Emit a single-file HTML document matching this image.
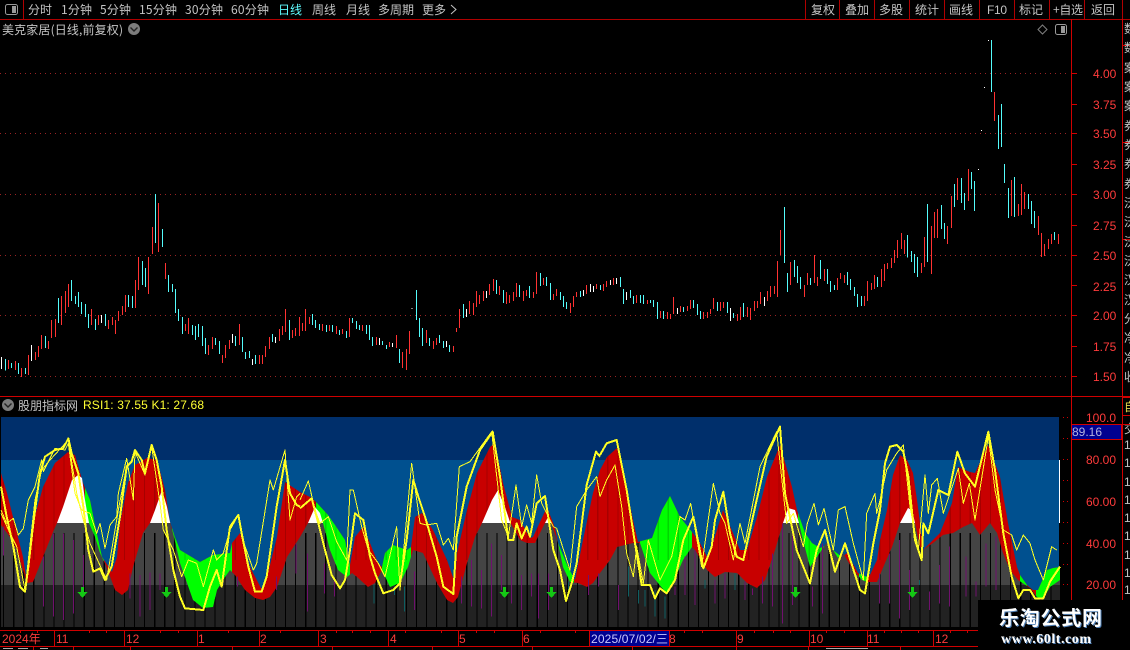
<!DOCTYPE html>
<html><head><meta charset="utf-8"><title>美克家居</title>
<style>
html,body{margin:0;padding:0;background:#000;width:1130px;height:650px;overflow:hidden}
svg{display:block;position:absolute;left:0;top:0}
text{font-family:"WenQuanYi Zen Hei","Noto Sans CJK SC",sans-serif;font-size:12px;fill:#c4c4c4}
.n{font-family:"Liberation Sans",sans-serif}
.r{fill:#ff3b3b;font-family:"Liberation Sans",sans-serif}
.c{stroke-width:3;fill:none;shape-rendering:crispEdges}
</style></head><body>
<svg width="1130" height="650" viewBox="0 0 1130 650" xmlns="http://www.w3.org/2000/svg">
<defs>
<clipPath id="u"><polygon points="1,473 7,493 17,533 23,557 27,583 33,523 43,487 55,463 68,452 75,455 83,483 90,500 95,525 102,557 106,563 112,572 117,557 120,523 128,483 135,465 147,458 157,460 165,490 170,522 175,537 180,550 200,562 213,555 230,553 232,543 240,533 250,567 262,590 267,577 277,537 285,482 300,492 312,498 317,503 328,515 335,525 345,540 350,565 355,537 363,527 370,543 378,563 382,567 385,553 393,545 407,550 411,547 415,517 422,513 433,530 447,560 455,583 457,553 467,510 477,473 490,447 495,443 503,483 512,517 520,520 530,538 533,537 547,507 555,528 558,543 568,567 575,580 583,540 593,493 600,470 607,457 617,448 627,490 633,520 638,542 652,538 662,510 670,496 680,517 692,532 700,543 707,557 713,543 723,510 733,533 740,550 747,550 757,517 767,477 780,445 792,487 797,510 805,533 812,543 820,548 827,545 833,550 842,557 847,553 858,573 867,577 870,575 877,560 880,540 887,510 893,475 900,455 907,460 913,473 917,500 920,523 923,550 940,533 952,503 958,467 970,472 975,473 988,445 1000,477 1008,523 1017,567 1020,575 1027,585 1033,590 1038,590 1047,570 1053,568 1060,567 1060,627 1,627"/></clipPath>
<clipPath id="m"><polygon points="1,525 10,537 17,550 23,570 27,583 33,582 43,557 53,532 57,523 63,507 72,480 78,475 82,478 85,500 89,523 95,537 100,553 107,568 115,590 122,595 128,590 133,567 143,533 150,523 155,510 162,490 167,507 170,522 173,533 180,563 193,600 203,608 213,607 217,590 225,577 230,570 235,575 245,590 255,598 263,600 270,597 277,587 287,557 300,537 308,523 315,507 320,513 323,523 330,550 338,570 347,577 352,573 357,577 368,587 375,583 382,570 390,587 400,583 408,567 413,550 423,553 437,583 447,600 453,603 458,597 467,563 475,537 482,523 492,500 498,490 505,507 510,522 520,540 527,543 535,543 545,523 548,517 552,525 558,543 563,567 570,582 578,583 587,587 593,583 600,573 610,560 617,547 633,543 640,543 650,573 662,588 667,593 673,583 683,560 692,547 695,550 707,570 715,577 725,572 737,573 747,583 757,588 765,580 775,550 783,523 788,508 795,510 799,523 803,540 810,567 817,557 827,542 833,550 838,558 843,553 853,570 862,580 867,582 877,582 885,563 892,547 900,523 908,508 912,510 915,523 920,547 923,550 933,543 943,535 953,533 963,527 972,523 980,535 990,523 997,533 1003,553 1010,570 1018,580 1030,588 1037,597 1043,599 1050,587 1060,580 1060,627 1,627"/></clipPath>
</defs>

<!-- toolbar -->
<rect x="0" y="19" width="1130" height="1" fill="#b00000"/>
<rect x="23" y="0" width="1" height="19" fill="#b00000"/>
<rect x="5.5" y="4.5" width="12" height="10" rx="2" fill="none" stroke="#9a9a9a"/>
<rect x="12" y="6" width="4" height="7" fill="#9a9a9a"/>
<text x="28" y="14">分时</text>
<text x="61" y="14" textLength="31">1分钟</text>
<text x="100" y="14" textLength="31">5分钟</text>
<text x="139" y="14" textLength="38">15分钟</text>
<text x="185" y="14" textLength="38">30分钟</text>
<text x="231" y="14" textLength="38">60分钟</text>
<text x="278" y="14" style="fill:#5ffcff">日线</text>
<text x="312" y="14">周线</text>
<text x="346" y="14">月线</text>
<text x="378" y="14">多周期</text>
<text x="422" y="14">更多</text>
<path d="M451 5l5 4.5-5 4.5" fill="none" stroke="#c4c4c4"/>
<path d="M805.5 0V19M839.5 0V19M874.5 0V19M909.5 0V19M944.5 0V19M979.5 0V19M1014.5 0V19M1049.5 0V19M1084.5 0V19M1122.5 0V19" stroke="#b00000" fill="none"/>
<text x="811" y="14">复权</text>
<text x="845" y="14">叠加</text>
<text x="879" y="14">多股</text>
<text x="915" y="14">统计</text>
<text x="949" y="14">画线</text>
<text x="987" y="14" class="n" textLength="20">F10</text>
<text x="1019" y="14">标记</text>
<text x="1053" y="14" textLength="30">+自选</text>
<text x="1091" y="14">返回</text>

<!-- title -->
<text x="2" y="34" textLength="121">美克家居(日线,前复权)</text>
<circle cx="134" cy="29" r="6" fill="#7c7c7c"/>
<path d="M130.5 27.5l3.5 3.5 3.5-3.5" fill="none" stroke="#222" stroke-width="1.4"/>
<path d="M1042.5 25l4.5 4.5-4.5 4.5-4.5-4.5z" fill="none" stroke="#808080"/>
<rect x="1055.5" y="24.5" width="11" height="10" rx="2" fill="none" stroke="#9a9a9a"/>
<rect x="1061" y="26" width="4" height="7" fill="#9a9a9a"/>

<!-- price grid -->
<path d="M0 73.5H1070M0 133.5H1070M0 194.5H1070M0 255.5H1070M0 315.5H1070M0 376.5H1070" stroke="#992222" stroke-dasharray="1 4" fill="none"/>

<!-- candles region 1 -->
<g transform="translate(0,190) scale(.33333)" class="c">
<path stroke="#ff3232" d="M25 510V537M46 513V540M64 534V561M85 495V555M106 486V510M115 468V501M124 435V477M145 453V477M154 390V444M166 387V441M184 318V405M196 303V369M205 282V351M274 357V405M295 375V405M325 390V417M337 381V405M346 390V432M355 363V393M367 348V375M376 315V366M406 270V354M415 201V300M445 201V312M457 111V192M475 39V186M496 219V267M556 402V423M565 384V432M625 465V495M637 441V477M667 495V519M676 465V504M688 450V477M718 402V465M778 495V522M787 495V522M796 468V501M808 441V477M838 417V453M847 408V435M856 357V426M877 420V444M886 414V438M898 381V438"/>
<path stroke="#54fcfc" d="M16 507V542M34 519V534M55 519V552M76 534V552M136 438V474M175 324V399M214 270V333M226 318V342M235 306V351M244 336V372M256 342V381M265 372V414M286 387V420M316 372V408M385 315V351M397 318V354M427 213V285M436 234V291M466 12V159M487 117V171M505 255V306M517 282V306M526 297V369M535 357V393M547 381V432M577 405V435M586 408V450M595 402V441M607 408V468M616 444V492M646 444V465M658 453V492M706 438V468M727 441V486M736 486V507M748 483V504M766 495V522M817 432V456M868 390V450"/>
<path stroke="#fff" d="M4 501V537M94 465V513M304 375V399M697 432V459M757 507V525M826 441V459"/>
</g>
<!-- candles region 2 -->
<g transform="translate(300,190) scale(.33333)" class="c">
<path stroke="#ff3232" d="M7 399V423M16 357V423M28 381V402M67 402V423M88 405V423M109 408V432M127 417V432M148 384V441M187 405V423M229 441V465M268 456V471M289 435V474M307 486V534M319 477V540M328 423V492M379 420V459M400 453V477M409 444V465M460 468V486M469 414V426M478 357V414M508 333V372M520 339V375M529 303V351M538 315V342M550 303V333M568 282V315M580 267V303M598 288V315M619 306V342M628 315V339M640 306V333M649 279V321M670 303V333M679 300V318M700 306V324M709 246V312M730 264V285M760 312V330M769 297V318M811 339V369M820 318V351M829 306V321M859 285V312M889 282V297"/>
<path stroke="#54fcfc" d="M37 372V405M46 390V414M58 402V420M79 405V426M97 405V426M118 420V435M139 423V444M157 384V399M169 393V417M178 405V420M199 405V432M208 405V450M217 441V468M247 453V465M259 465V477M298 477V519M349 300V390M358 384V441M367 414V468M388 444V468M418 435V459M430 453V474M448 465V486M490 342V384M589 270V312M610 300V339M658 285V321M688 288V324M721 249V288M739 261V288M751 279V330M781 306V330M790 318V351M799 336V357M841 303V321"/>
<path stroke="#fff" d="M238 444V465M277 459V471M336 354V357M439 453V471M499 357V381M559 303V324M850 300V318M871 282V306M880 288V306"/>
</g>
<!-- candles region 3 -->
<g transform="translate(600,190) scale(.33333)" class="c">
<path stroke="#ff3232" d="M10 282V303M19 273V291M40 264V285M109 315V339M142 330V342M181 363V384M202 366V387M211 372V387M220 321V372M241 348V366M262 348V363M271 330V357M310 366V387M322 366V384M331 357V372M340 324V357M361 336V363M370 336V354M412 372V393M421 351V390M442 351V381M451 354V390M463 333V363M472 333V354M481 306V342M502 303V333M511 288V321M523 288V312M532 213V321M541 120V195M571 216V285M613 285V321M622 249V285M643 195V279M652 261V288M673 237V273M712 264V300M721 249V267M733 255V279M793 318V348M802 273V333M814 279V300M823 255V297M844 237V291M853 222V273M862 219V237M874 204V234M883 180V219M892 150V204"/>
<path stroke="#54fcfc" d="M1 285V300M61 261V291M70 297V342M91 300V324M100 318V342M121 315V339M130 315V342M151 330V339M160 330V351M172 336V387M190 363V387M250 351V366M280 330V354M292 342V375M301 363V387M352 336V363M382 336V369M400 369V384M430 339V381M553 51V219M562 249V306M583 210V261M592 228V279M601 261V297M631 264V285M661 210V267M682 237V282M691 273V306M703 285V300M742 246V285M751 267V300M763 291V318M772 312V351M784 318V348M832 261V291"/>
<path stroke="#fff" d="M31 270V285M49 264V282M79 306V330M232 354V372M391 354V393M493 321V348"/>
</g>
<!-- candles region 4 -->
<g transform="translate(900,30) scale(.33333)" class="c">
<path stroke="#ff3232" d="M4 609V657M13 630V672M64 699V729M73 621V711M94 588V732M103 546V624M112 537V624M142 588V642M154 498V594M172 444V510M205 417V513M283 186V273M334 450V558M355 522V558M364 462V555M373 486V537M415 558V615M424 609V681M433 642V678M445 627V657M454 612V642M475 612V642"/>
<path stroke="#54fcfc" d="M22 615V683M34 663V696M43 672V729M52 681V741M82 522V696M124 525V597M133 579V627M163 462V531M184 444V519M193 489V540M214 426V477M223 453V543M274 30V186M295 255V357M304 222V351M313 402V459M325 474V564M343 441V561M385 492V537M394 513V582M403 543V594M463 606V630"/>
<path stroke="#fff" d="M235 417V420M244 300V303M253 171V174M265 30V33"/>
</g>

<!-- axis frames -->
<rect x="0" y="396" width="1130" height="1" fill="#d00000"/>
<rect x="1071" y="19" width="1" height="620" fill="#d00000"/>
<rect x="1122" y="19" width="1" height="620" fill="#d00000"/>
<path d="M1122 45.5H1130M1122 142.5H1130M1122 239.5H1130M1122 397.5H1130" stroke="#d00000"/>
<path d="M1072 73.5h5M1072 104.5h5M1072 133.5h5M1072 164.5h5M1072 194.5h5M1072 225.5h5M1072 255.5h5M1072 285.5h5M1072 315.5h5M1072 346.5h5M1072 376.5h5" stroke="#d00000"/>
<g class="r">
<text class="r" x="1093" y="78">4.00</text>
<text class="r" x="1093" y="109">3.75</text>
<text class="r" x="1093" y="138">3.50</text>
<text class="r" x="1093" y="169">3.25</text>
<text class="r" x="1093" y="199">3.00</text>
<text class="r" x="1093" y="230">2.75</text>
<text class="r" x="1093" y="260">2.50</text>
<text class="r" x="1093" y="291">2.25</text>
<text class="r" x="1093" y="320">2.00</text>
<text class="r" x="1093" y="351">1.75</text>
<text class="r" x="1093" y="381">1.50</text>
</g>
<!-- clipped side column -->
<svg x="1123" y="20" width="7" height="380" overflow="hidden">
<text x="1" y="13">数</text><text x="1" y="32">数</text><text x="1" y="52">案</text><text x="1" y="71">案</text><text x="1" y="90">案</text><text x="1" y="110">券</text><text x="1" y="129">券</text><text x="1" y="148">券</text><text x="1" y="168">券</text><text x="1" y="187">沃</text><text x="1" y="206">沃</text><text x="1" y="226">沃</text><text x="1" y="245">沃</text><text x="1" y="264">汉</text><text x="1" y="284">汉</text><text x="1" y="303">分</text><text x="1" y="322">净</text><text x="1" y="342">净</text><text x="1" y="361">收</text>
</svg>

<!-- lower panel header -->
<circle cx="8" cy="405" r="6" fill="#7c7c7c"/>
<path d="M4.5 403.5l3.5 3.5 3.5-3.5" fill="none" stroke="#222" stroke-width="1.4"/>
<text x="18" y="410">股朋指标网</text>
<text class="n" x="83" y="409" style="fill:#ffff33" textLength="121">RSI1: 37.55  K1: 27.68</text>

<!-- oscillator -->
<rect x="1" y="417" width="1058" height="43" fill="#002f6b"/>
<rect x="1" y="460" width="1058" height="167" fill="#00508f"/>
<g clip-path="url(#u)" shape-rendering="crispEdges">
<rect x="1" y="417" width="1059" height="210" fill="#c80000"/>
<path fill="#00ff00" d="M85 417h19v210h-19zM172 417h60v210h-60zM316 417h34v210h-34zM382 417h29v210h-29zM558 417h16v210h-16zM640 417h52v210h-52zM798 417h44v210h-44zM859 417h8v210h-8zM1020 417h7v210h-7zM1036 417h24v210h-24z"/>
<path d="M3 495H1060" stroke="#000" stroke-opacity=".16" stroke-width="130" stroke-dasharray="1.2 8.87" fill="none"/>
</g>
<g clip-path="url(#m)" shape-rendering="crispEdges">
<rect x="1" y="417" width="1059" height="106" fill="#fff"/>
<rect x="1" y="523" width="1059" height="62" fill="#444"/>
<rect x="1" y="585" width="1059" height="42" fill="#222"/>
<path d="M3 580H1060" stroke="#000" stroke-width="94" stroke-dasharray="1.2 8.87" fill="none"/>
</g>
<!-- purple / teal columns -->
<g fill="none" stroke-width="3" shape-rendering="crispEdges">
<path transform="translate(0,390) scale(.33333)" stroke="#70106e" d="M10 410V497M130 500V650M160 430V680M190 430V690M220 450V670M250 495V600M390 550V625M420 555V680M450 548V660M480 550V600M712 560V590M830 560V600M888 460V550"/>
<path transform="translate(300,410) scale(.33333)" stroke="#70106e" d="M22 430V605M73 460V550M103 510V560M343 485V600M484 500V580M515 450V590M545 480V595M575 400V620M605 435V540M635 480V580M665 495V600M695 490V560M715 490V625M745 490V600M866 495V555M895 490V530"/>
<path transform="translate(300,410) scale(.33333)" stroke="#0e5f62" d="M222 525V580M283 530V555M313 530V605M805 515V540"/>
<path transform="translate(600,410) scale(.33333)" stroke="#70106e" d="M55 525V600M225 530V555M255 440V555M285 420V585M345 510V580M375 490V565M435 515V570M457 535V555M487 500V580M517 430V590M547 340V640M577 340V585M637 530V590M667 400V610M838 490V580M868 430V580"/>
<path transform="translate(600,410) scale(.33333)" stroke="#0e5f62" d="M85 470V560M115 540V580M135 540V590M165 540V620M195 560V625M315 510V535M405 490V540"/>
<path transform="translate(880,390) scale(.33333)" stroke="#70106e" d="M28 510V625M58 450V685M88 540V660M148 605V660M178 525V640M208 470V650M258 500V620M288 575V620M318 460V590M348 440V600"/>
<path transform="translate(880,390) scale(.33333)" stroke="#0e5f62" d="M118 570V585"/>
</g>
<rect x="1059" y="460" width="1" height="63" fill="#fff"/>

<!-- yellow lines -->
<g fill="none" stroke="#ffff22" stroke-linejoin="round" shape-rendering="crispEdges">
<g transform="translate(0,390) scale(.33333)">
<polyline stroke-width="3" points="3,360 20,400 40,385 55,435 70,415 85,330 105,290 125,210 130,245 165,175 195,180 205,160 225,310 245,360 270,370 290,430 300,400 315,475 330,405 350,380 355,310 380,205 400,330 405,185 435,255 455,170 480,340 490,420 520,480 545,560 565,510 590,520 610,590 640,480 650,510 670,490 690,420 715,375 725,440 760,540 770,520 810,270 820,300 855,180 870,390 890,320 900,310"/>
<polyline stroke-width="3" points="3,370 30,430 50,470 75,600 105,330 125,240 150,210 205,150 230,310 250,390 270,460 320,570 355,360 380,230"/>
<polyline stroke-width="6" points="3,290 20,380 40,470 60,590 75,605 85,530 100,400 120,250 135,200 165,180 190,175 205,145 215,190 235,250 250,350 265,480 280,545 300,535 315,570 335,530 360,380 380,230 395,215 405,180 425,210 435,250 455,165 470,210 485,290 500,420 520,540 540,620 555,655 610,660 630,590 650,540 665,590 690,410 715,375 725,430 745,530 765,605 785,605 800,560 830,350 855,210 870,310 890,345 900,350"/>
</g>
<g transform="translate(300,410) scale(.33333)">
<polyline stroke-width="3" points="0,270 25,213 45,300 60,340 85,320 110,395 140,450 150,240 160,240 185,350 205,420 235,460 255,500 290,350 300,540 335,160 360,340 380,345 410,340 430,405 445,385 460,420 478,170 510,155 575,65 605,330 625,380 648,225 665,350 680,285 695,340 710,195 725,280 760,350 770,355 810,480 830,290 860,240 890,200 900,260"/>
<polyline stroke-width="6" points="0,295 35,265 55,340 75,420 95,495 120,535 135,510 150,420 165,310 190,330 210,440 225,490 250,550 280,540 300,520 320,390 340,210 355,260 375,320 410,440 430,530 460,552 470,380 500,230 540,120 578,65 600,200 625,390 640,390 650,340 665,385 680,350 690,380 710,280 735,258 760,420 780,480 798,573 815,520 830,460 860,225 888,125 900,140"/>
</g>
<g transform="translate(600,410) scale(.33333)">
<polyline stroke-width="3" points="0,260 20,210 45,165 65,290 80,430 100,500 110,410 130,520 145,390 180,510 215,440 240,320 255,330 272,280 305,470 340,220 360,310 375,340 400,450 420,340 435,400 480,170 530,65 560,340 580,310 610,410 622,340 642,280 655,345 672,295 700,420 715,300 735,290 760,400 790,510 800,310 825,250 830,310 840,270"/>
<polyline stroke-width="6" points="0,135 20,100 50,90 80,240 105,400 125,525 150,525 165,565 180,535 200,550 225,510 250,390 280,320 310,475 335,410 345,330 370,245 390,370 410,440 430,450 470,270 500,140 540,50 555,250 590,420 630,520 650,420 675,360 705,485 735,400 780,540 795,550 820,400 840,300"/>
</g>
<g transform="translate(880,390) scale(.33333)">
<polyline stroke-width="3" points="0,330 20,240 50,190 70,165 90,350 115,480 135,255 145,370 155,285 172,265 190,370 235,235 250,340 268,280 285,390 325,140 345,300 370,420 395,435 410,480 430,435 450,460 465,510 490,570 515,470 530,480"/>
<polyline stroke-width="6" points="0,360 15,220 30,170 50,165 70,185 85,260 105,450 125,510 130,400 145,430 175,300 205,315 232,185 255,250 285,290 325,125 345,240 370,430 395,560 415,625 430,600 450,600 465,625 490,625 510,575 540,530"/>
</g>
</g>

<!-- arrows -->
<g fill="#14c814" shape-rendering="crispEdges">
<path d="M81 587h3v5h3.500l-5 6-5-6h3.500z"/>
<path d="M165 587h3v5h3.500l-5 6-5-6h3.500z"/>
<path d="M503 587h3v5h3.500l-5 6-5-6h3.500z"/>
<path d="M550 587h3v5h3.500l-5 6-5-6h3.500z"/>
<path d="M794 587h3v5h3.500l-5 6-5-6h3.500z"/>
<path d="M911 587h3v5h3.500l-5 6-5-6h3.500z"/>
</g>

<!-- lower axis -->
<path d="M1063 417.500h8M1063 438.500h8M1063 459.500h8M1063 480.500h8M1063 501.500h8M1063 522.500h8M1063 543.500h8M1063 564.500h8M1063 584.500h8" stroke="#d00000" stroke-dasharray="1 3"/>
<text class="r" x="1086" y="422">100.0</text>
<text class="r" x="1086" y="464">80.00</text>
<text class="r" x="1086" y="506">60.00</text>
<text class="r" x="1086" y="548">40.00</text>
<text class="r" x="1086" y="589">20.00</text>
<rect x="1071.500" y="424.500" width="50" height="15" fill="#000090" stroke="#d00000"/>
<text class="n" x="1072" y="436" style="fill:#b4b4e0">89.16</text>
<rect x="1123" y="398" width="7" height="18" fill="#000"/>
<svg x="1123" y="398" width="7" height="210" overflow="hidden">
<text x="1" y="13" style="fill:#e6d24a">自</text><text x="1" y="35">交</text>
<text class="n" x="1" y="51">1</text><text class="n" x="1" y="69">1</text><text class="n" x="1" y="88">1</text><text class="n" x="1" y="106">1</text><text class="n" x="1" y="124">1</text><text class="n" x="1" y="142">1</text><text class="n" x="1" y="161">1</text><text class="n" x="1" y="179">1</text><text class="n" x="1" y="196">1</text>
</svg>
<path d="M1122 415.500H1130M1122 424.500H1130" stroke="#d00000"/>

<!-- time axis -->
<rect x="0" y="630" width="1070" height="1" fill="#d00000"/>
<rect x="0" y="646" width="1070" height="1" fill="#d00000"/>
<path d="M54.500 630v16M124.500 630v16M197.500 630v16M259.500 630v16M318.500 630v16M388.500 630v16M458.500 630v16M522.500 630v16M589.500 630v16M669.500 630v16M736.500 630v16M809.500 630v16M867.500 630v16M933.500 630v16M978.500 630v16" stroke="#d00000"/>
<path d="M20.500 631v2M37.500 631v2M89.500 631v2M106.500 631v2M160.500 631v2M178.500 631v2M228.500 631v2M280.500 631v2M336.500 631v2M352.500 631v2M370.500 631v2M405.500 631v2M441.500 631v2M476.500 631v2M494.500 631v2M540.500 631v2M575.500 631v2M684.500 631v2M702.500 631v2M754.500 631v2M773.500 631v2M790.500 631v2M826.500 631v2M844.500 631v2M884.500 631v2M901.500 631v2M918.500 631v2M950.500 631v2M967.500 631v2" stroke="#d00000"/>
<text class="r" x="2" y="643" style="font-family:'Liberation Sans','WenQuanYi Zen Hei',sans-serif">2024年</text>
<text class="r" x="56" y="643">11</text>
<text class="r" x="126" y="643">12</text>
<text class="r" x="198" y="643">1</text>
<text class="r" x="260" y="643">2</text>
<text class="r" x="320" y="643">3</text>
<text class="r" x="390" y="643">4</text>
<text class="r" x="459" y="643">5</text>
<text class="r" x="523" y="643">6</text>
<rect x="590" y="631" width="79" height="15" fill="#000090"/>
<text class="n" x="591" y="643" style="fill:#c8c8ff" textLength="77">2025/07/02/三</text>
<text class="r" x="669" y="643">8</text>
<text class="r" x="737" y="643">9</text>
<text class="r" x="810" y="643">10</text>
<text class="r" x="867" y="643">11</text>
<text class="r" x="935" y="643">12</text>
<path d="M33.500 647v3M73.500 647v3M130.500 647v3M232.500 647v3M332.500 647v3M432.500 647v3M532.500 647v3M632.500 647v3M736.500 647v3M808.500 647v3M900.500 647v3" stroke="#d00000"/>
<path d="M3 648.500h10M18 648.500h10M40 648.500h8M826 648.500h42" stroke="#aaa"/>

<!-- watermark -->
<rect x="978" y="600" width="152" height="50" fill="#000"/>
<text x="1000" y="626" textLength="103" style="font-family:'Noto Sans CJK SC',sans-serif;font-weight:700;font-size:20px;fill:#4f7fb5">乐淘公式网</text>
<text x="999" y="625" textLength="103" style="font-family:'Noto Sans CJK SC',sans-serif;font-weight:700;font-size:20px;fill:#fff">乐淘公式网</text>
<text x="1002" y="644" textLength="90" style="font-family:'Liberation Serif',serif;font-weight:700;font-size:14px;fill:#4f7fb5">www.60lt.com</text>
<text x="1001" y="643" textLength="90" style="font-family:'Liberation Serif',serif;font-weight:700;font-size:14px;fill:#fff">www.60lt.com</text>
</svg>
</body></html>
